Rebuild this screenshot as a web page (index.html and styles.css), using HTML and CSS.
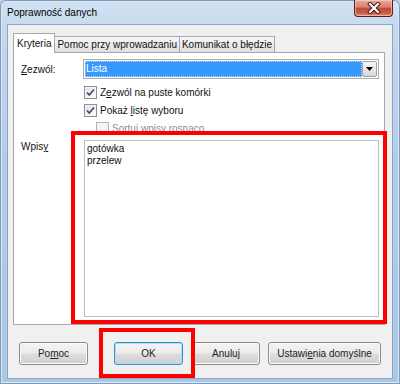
FILE: index.html
```html
<!DOCTYPE html>
<html lang="pl">
<head>
<meta charset="utf-8">
<title>Poprawność danych</title>
<link rel="stylesheet" href="styles.css">
</head>
<body>
<div class="window">
  <div class="titlebar">
    <span class="title">Poprawność danych</span>
    <div class="close">
      <svg width="14" height="12" viewBox="0 0 14 12">
        <path d="M3 2 L11 10 M11 2 L3 10" stroke="#3b130c" stroke-width="4" stroke-linecap="square" fill="none"/>
        <path d="M3 2 L11 10 M11 2 L3 10" stroke="#ffffff" stroke-width="2.2" stroke-linecap="square" fill="none"/>
      </svg>
    </div>
  </div>
  <div class="client">
    <div class="tabs">
      <div class="tab active">Kryteria</div>
      <div class="tab">Pomoc przy wprowadzaniu</div>
      <div class="tab">Komunikat o błędzie</div>
    </div>
    <div class="panel">
      <div class="row-allow">
        <span class="label"><u>Z</u>ezwól:</span>
        <div class="select">
          <div class="sel-value">Lista</div>
          <div class="sel-btn">
            <svg width="7" height="4" viewBox="0 0 7 4"><path d="M0 0 H7 L3.5 4 Z" fill="#000"/></svg>
          </div>
        </div>
      </div>
      <div class="checks">
        <div class="check">
          <span class="box"><svg width="11" height="11" viewBox="0 0 11 11"><path d="M2 5.5 L4.3 8 L9 2.5" stroke="#3d4d6e" stroke-width="1.7" fill="none"/></svg></span>
          <span>Z<u>e</u>zwól na puste komórki</span>
        </div>
        <div class="check">
          <span class="box"><svg width="11" height="11" viewBox="0 0 11 11"><path d="M2 5.5 L4.3 8 L9 2.5" stroke="#3d4d6e" stroke-width="1.7" fill="none"/></svg></span>
          <span>Pokaż <u>l</u>istę wyboru</span>
        </div>
        <div class="check sub disabled">
          <span class="box"></span>
          <span><u>S</u>ortuj wpisy rosnąco</span>
        </div>
      </div>
      <div class="row-entries">
        <span class="label label-entries">Wpis<u>y</u></span>
        <div class="listbox">
          <div>gotówka</div>
          <div>przelew</div>
        </div>
      </div>
    </div>
    <div class="buttons">
      <div class="btn btn-help">Po<u>m</u>oc</div>
      <div class="btn btn-ok">OK</div>
      <div class="btn btn-cancel">Anuluj</div>
      <div class="btn btn-defaults">Ustawi<u>e</u>nia domyślne</div>
    </div>
  </div>
  <div class="mark mark-list"></div>
  <div class="mark mark-ok"></div>
</div>
</body>
</html>
```
FILE: styles.css
```css
* { box-sizing: border-box; }
html, body { margin: 0; padding: 0; }
body {
  width: 400px;
  height: 384px;
  overflow: hidden;
  font-family: "Liberation Sans", Arial, sans-serif;
  font-size: 10px;
  color: #111;
  background: #b9d1ea;
}
u { text-decoration: underline; text-underline-offset: 1px; }

.window {
  position: relative;
  width: 400px;
  height: 384px;
  display: flex;
  flex-direction: column;
  background: linear-gradient(180deg, #d3e2f2 0%, #c4d8ee 8%, #b3cde9 40%, #aac7e6 100%);
  box-shadow: inset 0 0 0 1px #7f9ab9, inset 0 0 0 2px #dbe8f5;
  border-radius: 6px 6px 0 0;
}

.titlebar {
  height: 24px;
  display: flex;
  align-items: flex-start;
  padding: 0 7px;
}
.title {
  margin-top: 7px;
  line-height: 12px;
  font-size: 10px;
  color: #000;
}
.close {
  margin-left: auto;
  width: 39px;
  height: 17px;
  border: 1px solid #55231b;
  border-top: none;
  border-radius: 0 0 4px 4px;
  background: linear-gradient(180deg, #e9a99b 0%, #d7826f 45%, #c14a35 50%, #cb5a43 80%, #e08c6e 100%);
  box-shadow: inset 0 0 0 1px rgba(255, 220, 210, 0.55);
  display: flex;
  align-items: center;
  justify-content: center;
}

.client {
  margin: 0 7px;
  height: 355px;
  border: 1px solid #8ea5c1;
  background: #f0f0f0;
  display: flex;
  flex-direction: column;
  padding: 8px 0 0 5px;
}

.tabs {
  display: flex;
  align-items: flex-end;
  height: 20px;
}
.tab {
  height: 16px;
  margin-bottom: 1px;
  margin-left: -1px;
  padding: 0 2px;
  border: 1px solid #a5a8b0;
  border-bottom: none;
  background: linear-gradient(180deg, #f7f7f7 0%, #ececec 50%, #e0e0e0 100%);
  line-height: 15px;
  white-space: nowrap;
}
.tab.active {
  height: 20px;
  margin-bottom: 0;
  margin-left: 0;
  padding: 0 3px;
  background: #fff;
  line-height: 19px;
  position: relative;
  z-index: 1;
}

.panel {
  margin-top: -1px;
  width: 372px;
  height: 273px;
  border: 1px solid #a5a8b0;
  background: #fff;
  padding: 6px 5px 0 7px;
}

.row-allow {
  display: flex;
  align-items: center;
  height: 20px;
}
.label {
  width: 62px;
  flex: none;
}
.select {
  flex: 1;
  height: 20px;
  border: 1px solid #a9abb2;
  padding: 1px;
  display: flex;
  background: #fff;
}
.sel-value {
  flex: 1;
  background: #3399ff;
  color: #fff;
  border: 1px dotted #c8d6e6;
  line-height: 14px;
}
.sel-btn {
  width: 15px;
  flex: none;
  border: 1px solid #9da1a8;
  border-radius: 2px;
  background: linear-gradient(180deg, #f6f6f6 0%, #e8e8e8 50%, #d6d6d6 100%);
  display: flex;
  align-items: center;
  justify-content: center;
}

.checks {
  margin-left: 63px;
  margin-top: 4px;
}
.check {
  display: flex;
  align-items: center;
  height: 18px;
  gap: 3px;
}
.check.sub { margin-left: 12px; }
.box {
  width: 13px;
  height: 13px;
  flex: none;
  border: 1px solid #8e8f8f;
  background: linear-gradient(135deg, #dcdee2 0%, #f2f3f4 60%, #ffffff 100%);
  box-shadow: inset 0 0 0 1px #f4f4f4;
  display: flex;
  align-items: center;
  justify-content: center;
}
.check.disabled { color: #8d8d8d; }
.check.disabled .box {
  border-color: #b4b4b4;
  background: #f4f4f4;
}

.row-entries {
  display: flex;
  margin-top: 3px;
}
.label-entries {
  width: 63px;
  padding-top: 1px;
  line-height: 12px;
}
.listbox {
  flex: 1;
  height: 177px;
  border: 1px solid #bdbdbd;
  padding: 2px 2px;
  line-height: 12px;
}

.buttons {
  display: flex;
  margin-top: 17px;
  padding-left: 6px;
}
.btn {
  height: 23px;
  width: 69px;
  border: 1px solid #8c8c8c;
  border-radius: 3px;
  background: linear-gradient(180deg, #f4f4f4 0%, #ebebeb 48%, #dddddd 52%, #d0d0d0 100%);
  box-shadow: inset 0 0 0 1px #fbfbfb;
  text-align: center;
  line-height: 21px;
  color: #222;
}
.btn-ok {
  margin-left: 26px;
  border-color: #3c8fc4;
  box-shadow: inset 0 0 0 1px #a6e1f8;
}
.btn-cancel { margin-left: 9px; width: 68px; }
.btn-defaults { margin-left: 8px; width: 113px; }

.mark {
  position: absolute;
  border: 4px solid #ff0000;
}
.mark-list { left: 71px; top: 131px; width: 316px; height: 193px; }
.mark-ok { left: 99px; top: 328px; width: 96px; height: 50px; }
```
